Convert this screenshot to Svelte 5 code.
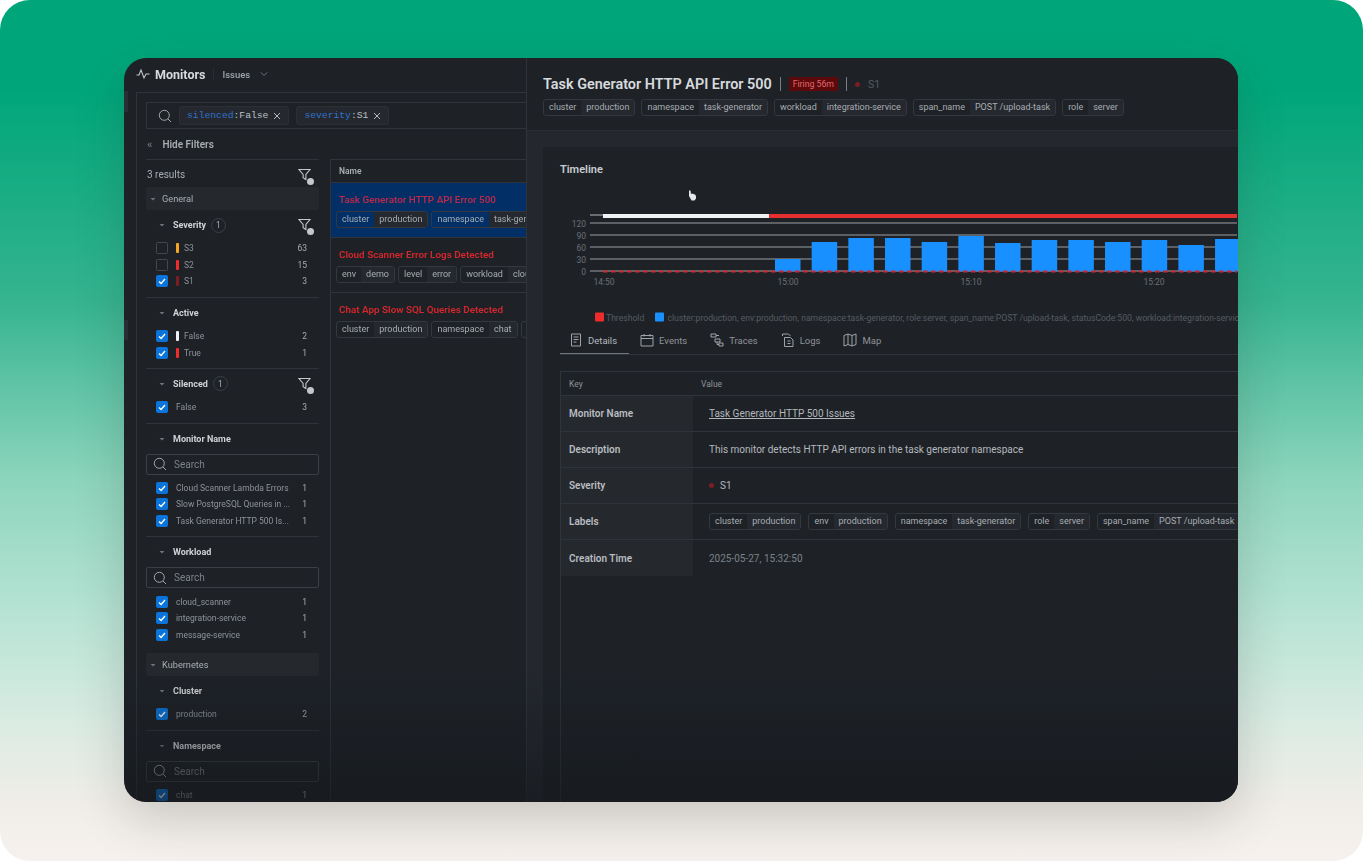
<script>
  const sevRows = [
    { label: "S3", color: "#f5a623", count: 63, on: false },
    { label: "S2", color: "#ef2b2b", count: 15, on: false },
    { label: "S1", color: "#7c1d24", count: 3, on: true }
  ];
  const monitors = ["Cloud Scanner Lambda Errors", "Slow PostgreSQL Queries in ...", "Task Generator HTTP 500 Is..."];
  const workloads = ["cloud_scanner", "integration-service", "message-service"];

  const issues = [
    { title: "Task Generator HTTP API Error 500", selected: true, chips: [["cluster", "production"], ["namespace", "task-generator"]] },
    { title: "Cloud Scanner Error Logs Detected", chips: [["env", "demo"], ["level", "error"], ["workload", "cloud_scanner"]] },
    { title: "Chat App Slow SQL Queries Detected", chips: [["cluster", "production"], ["namespace", "chat"], ["workload", "chat"]] }
  ];

  const headChips = [["cluster", "production"], ["namespace", "task-generator"], ["workload", "integration-service"], ["span_name", "POST /upload-task"], ["role", "server"]];
  const labelChips = [["cluster", "production"], ["env", "production"], ["namespace", "task-generator"], ["role", "server"], ["span_name", "POST /upload-task"]];

  const tabs = ["Details", "Events", "Traces", "Logs", "Map"];

  const grid = [[120, 223], [90, 235], [60, 247], [30, 259], [0, 271]];
  const barTops = [259, 242, 238, 238, 242, 236, 243, 240, 240, 242, 240, 245, 239];
  const ticks = [["14:50", 604], ["15:00", 788], ["15:10", 971], ["15:20", 1154]];
</script>

{#snippet chip(pair)}
  <span class="chip"><span class="k">{pair[0]}</span><span class="v">{pair[1]}</span></span>
{/snippet}

{#snippet check(on)}
  <span class="box" class:on>
    {#if on}
      <svg viewBox="0 0 12 12" width="12" height="12"><path d="M3 6.400 5.100 8.400 9 4" fill="none" stroke="#fff" stroke-width="1.400"/></svg>
    {/if}
  </span>
{/snippet}

{#snippet caret()}
  <svg class="caret" viewBox="0 0 8 8" width="8" height="8"><path d="M1.500 3h5L4 5.600z" fill="#6d737b"/></svg>
{/snippet}

{#snippet filterIcon()}
  <span class="fi">
    <svg viewBox="0 0 14 14" width="14" height="14"><path d="M1 1.500h11L7.900 6.500v5L5.100 9.800V6.500z" fill="none" stroke="#c4c8cc" stroke-width="1.100"/></svg>
    <i></i>
  </span>
{/snippet}

{#snippet search()}
  <svg viewBox="0 0 14 14" width="14" height="14"><circle cx="6.300" cy="6.300" r="5" fill="none" stroke="#a2a7ad" stroke-width="1"/><path d="M10 10l3 3" stroke="#a2a7ad" stroke-width="1"/></svg>
{/snippet}

{#snippet cross()}
  <svg viewBox="0 0 8 8" width="8" height="8"><path d="M1 1l6 6M7 1L1 7" stroke="#b4b8bd" stroke-width="1"/></svg>
{/snippet}

{#snippet tabIcon(name)}
  <svg viewBox="0 0 14 14" width="14" height="14" fill="none" stroke="#9ea3a9" stroke-width="1">
    {#if name === "Details"}
      <path d="M2.500 1h9v12h-9z M4.500 4h5 M4.500 6.500h5 M4.500 9h3"/>
    {:else if name === "Events"}
      <path d="M1 2.500h12v10.500H1z M1 5.500h12 M4 1v2.500 M10 1v2.500"/>
    {:else if name === "Traces"}
      <path d="M1 1h5v3H1z M5 6h5v3H5z M9 10h4v3H9z M6 2.500h3 M7 9v2.500h2"/>
    {:else if name === "Logs"}
      <path d="M1.500 3V1h6l2 2M3.500 4.500h6l2.500 2.500v6.500H3.500z M6.500 8h3 M6.500 10.500h3"/>
    {:else}
      <path d="M1 2.500l4-1.500 4 1.500 4-1.500v10.500l-4 1.500-4-1.500-4 1.500z M5 1v10.500 M9 2.500V13"/>
    {/if}
  </svg>
{/snippet}

<div class="page">
  <div class="window">
    <span class="grip one"></span>
    <span class="grip two"></span>

    <section class="left">
      <header class="topbar">
        <svg viewBox="0 0 14 12" width="14" height="12"><path d="M.5 7h2.500l2-5 3 8 2-4h3.500" fill="none" stroke="#c4c8cc" stroke-width="1.100"/></svg>
        <strong>Monitors</strong>
        <span class="sep"></span>
        <span class="issues">Issues</span>
        <svg viewBox="0 0 8 8" width="8" height="8"><path d="M1 2.500l3 3 3-3" fill="none" stroke="#6d737b" stroke-width="1"/></svg>
      </header>

      <div class="body">
        <div class="searchbar">
          {@render search()}
          <span class="tag"><span><b>silenced</b>:False</span>{@render cross()}</span>
          <span class="tag"><span><b>severity</b>:S1</span>{@render cross()}</span>
        </div>
        <div class="hide"><span class="chev">«</span>Hide Filters</div>

        <div class="split">
          <aside class="filters">
            <div class="results"><span>3 results</span>{@render filterIcon()}</div>

            <div class="group">{@render caret()}General</div>

            <div class="sec">
              <div class="sec-head">{@render caret()}<strong>Severity</strong><span class="num">1</span>{@render filterIcon()}</div>
              {#each sevRows as r}
                <div class="row">{@render check(r.on)}<i class="mark" style="background: {r.color}"></i><span class="name">{r.label}</span><span class="n">{r.count}</span></div>
              {/each}
            </div>

            <div class="sec">
              <div class="sec-head">{@render caret()}<strong>Active</strong></div>
              <div class="row">{@render check(true)}<i class="mark" style="background: #eef0f2"></i><span class="name">False</span><span class="n">2</span></div>
              <div class="row">{@render check(true)}<i class="mark" style="background: #ef2b2b"></i><span class="name">True</span><span class="n">1</span></div>
            </div>

            <div class="sec">
              <div class="sec-head">{@render caret()}<strong>Silenced</strong><span class="num">1</span>{@render filterIcon()}</div>
              <div class="row">{@render check(true)}<span class="name">False</span><span class="n">3</span></div>
            </div>

            <div class="sec">
              <div class="sec-head">{@render caret()}<strong>Monitor Name</strong></div>
              <div class="find">{@render search()}Search</div>
              {#each monitors as m}
                <div class="row">{@render check(true)}<span class="name">{m}</span><span class="n">1</span></div>
              {/each}
            </div>

            <div class="sec last">
              <div class="sec-head">{@render caret()}<strong>Workload</strong></div>
              <div class="find">{@render search()}Search</div>
              {#each workloads as m}
                <div class="row">{@render check(true)}<span class="name">{m}</span><span class="n">1</span></div>
              {/each}
            </div>

            <div class="group">{@render caret()}Kubernetes</div>

            <div class="sec">
              <div class="sec-head">{@render caret()}<strong>Cluster</strong></div>
              <div class="row">{@render check(true)}<span class="name">production</span><span class="n">2</span></div>
            </div>

            <div class="sec last">
              <div class="sec-head">{@render caret()}<strong>Namespace</strong></div>
              <div class="find">{@render search()}Search</div>
              <div class="row">{@render check(true)}<span class="name">chat</span><span class="n">1</span></div>
            </div>
          </aside>

          <div class="list">
            <div class="list-head">Name</div>
            {#each issues as it}
              <div class="issue" class:selected={it.selected}>
                <div class="issue-title">{it.title}</div>
                <div class="chips">
                  {#each it.chips as c}{@render chip(c)}{/each}
                </div>
              </div>
            {/each}
          </div>
        </div>
      </div>
    </section>

    <section class="right">
      <header class="detail-head">
        <div class="title-row">
          <h1>Task Generator HTTP API Error 500</h1>
          <span class="bar"></span>
          <span class="firing">Firing 56m</span>
          <span class="bar"></span>
          <i class="dot"></i><span class="sev">S1</span>
        </div>
        <div class="chips">
          {#each headChips as c}{@render chip(c)}{/each}
        </div>
      </header>

      <div class="card">
        <h2>Timeline</h2>

        <svg class="chart" viewBox="560 180 678 145" width="678" height="145">
          <!-- cursor -->
          <path d="M689 190.500l1.500 0 .5 3.500 1-.5 3 1 1 1.500v2.500l-1.500 2h-3l-2.500-4.500z" fill="#e6e8ea"/>
          <line x1="590" x2="603" y1="215" y2="215" stroke="#9b9ea2" stroke-width="1.200"/>
          {#each grid as [v, y]}
            <line x1="590" x2="1237" y1={y} y2={y} stroke="#9b9ea2" stroke-width="1.200"/>
            <text x="586" y={y + 3.500} text-anchor="end" class="axis">{v}</text>
          {/each}
          <rect x="603" y="214" width="166" height="4" fill="#f1f2f3"/>
          <rect x="769" y="214" width="468" height="4" fill="#e5302f"/>
          {#each barTops as top, i}
            <rect x={775 + i * 36.67} y={top} width="25.500" height={271.500 - top} fill="#1890ff"/>
          {/each}
          <line x1="603" x2="1237" y1="271.500" y2="271.500" stroke="#cf2630" stroke-width="1.800" stroke-dasharray="4.500 3.500"/>
          {#each ticks as [t, x]}
            <text x={x} y="284.500" text-anchor="middle" class="axis">{t}</text>
          {/each}
          <rect x="595" y="312.500" width="9" height="9" rx="1" fill="#ef2b2b"/>
          <text x="606" y="320.500" class="legend">Threshold</text>
          <rect x="655" y="312.500" width="9" height="9" rx="1" fill="#1890ff"/>
          <text x="667.500" y="320.500" class="legend">cluster:production, env:production, namespace:task-generator, role:server, span_name:POST /upload-task, statusCode:500, workload:integration-service</text>
        </svg>

        <nav class="tabs">
          {#each tabs as t, i}
            <span class="tab" class:active={i === 0}>{@render tabIcon(t)}{t}</span>
          {/each}
        </nav>

        <div class="kv">
          <div class="kv-row head"><div class="key">Key</div><div class="val">Value</div></div>
          <div class="kv-row"><div class="key">Monitor Name</div><div class="val"><u>Task Generator HTTP 500 Issues</u></div></div>
          <div class="kv-row"><div class="key">Description</div><div class="val">This monitor detects HTTP API errors in the task generator namespace</div></div>
          <div class="kv-row"><div class="key">Severity</div><div class="val"><i class="dot"></i>S1</div></div>
          <div class="kv-row"><div class="key">Labels</div><div class="val chips">{#each labelChips as c}{@render chip(c)}{/each}</div></div>
          <div class="kv-row end"><div class="key">Creation Time</div><div class="val muted">2025-05-27, 15:32:50</div></div>
        </div>
      </div>
    </section>

    <div class="fade"></div>
  </div>
</div>

<style>
  :global(body) {
    margin: 0;
    background: #fff;
  }

  .page {
    width: 1363px;
    height: 861px;
    box-sizing: border-box;
    padding: 58px 125px 59px 124px;
    border-radius: 30px;
    overflow: hidden;
    background: linear-gradient(180deg, #00a67a 0, #00a67a 90px, #35b48f 300px, #8dd5bd 480px, #b9e4d5 620px, #d9ebe2 720px, #f0ede8 800px, #f6f1ee 861px);
    font-family: Roboto, sans-serif;
  }

  .window {
    position: relative;
    display: flex;
    height: 744px;
    border-radius: 22px;
    overflow: hidden;
    background: #1e2227;
    color: #c8ccd0;
    box-shadow: 0 16px 50px rgba(40, 40, 40, 0.2);
    filter: blur(0.55px);
  }

  .grip {
    position: absolute;
    left: 0;
    width: 4px;
    background: #2a2e34;
  }

  .grip.one {
    top: 33px;
    height: 21px;
  }

  .grip.two {
    top: 262px;
    height: 20px;
  }

  .fade {
    position: absolute;
    left: 0;
    right: 0;
    bottom: 0;
    height: 130px;
    background: linear-gradient(180deg, rgba(20, 23, 27, 0), rgba(20, 23, 27, 0.6));
    pointer-events: none;
  }

  .left {
    width: 402px;
    flex: none;
    display: flex;
    flex-direction: column;
    border-right: 1px solid #2f343a;
  }

  .topbar {
    height: 34px;
    flex: none;
    display: flex;
    align-items: center;
    gap: 5px;
    padding: 0 0 2px 12px;
    box-sizing: border-box;
    font-size: 11px;
  }

  .topbar strong {
    font-size: 12.500px;
    color: #d8dbde;
  }

  .sep {
    width: 1px;
    height: 12px;
    margin: 0 3px;
    background: #2a2e34;
  }

  .issues {
    font-size: 9.500px;
    font-weight: 500;
    color: #9ea3a9;
    margin-right: 5px;
  }

  .body {
    flex: 1;
    min-height: 0;
    margin-left: 12px;
    padding-left: 9px;
    border-left: 1px solid #2f343a;
    border-top: 1px solid #2f343a;
  }

  .searchbar {
    height: 27px;
    margin-top: 9px;
    display: flex;
    align-items: center;
    gap: 7px;
    padding-left: 11px;
    border: 1px solid #2f343a;
    border-right: 0;
    box-sizing: border-box;
  }

  .tag {
    height: 17px;
    padding: 0 7px 0 7px;
    display: flex;
    align-items: center;
    gap: 5px;
    white-space: pre;
    font: 9.700px "Liberation Mono", monospace;
    color: #bcc0c5;
    background: #25292f;
    border: 1px solid #2c3036;
    border-radius: 3px;
  }

  .tag b {
    font-weight: 400;
    color: #2f72cc;
  }

  .hide {
    height: 30px;
    display: flex;
    align-items: center;
    gap: 10px;
    font-size: 10px;
    font-weight: 600;
    color: #a8adb2;
  }

  .chev {
    color: #6d737b;
    font-size: 11px;
    padding-left: 1px;
  }

  .split {
    display: flex;
    gap: 11px;
    align-items: stretch;
  }

  .filters {
    width: 173px;
    flex: none;
    border-top: 1px solid #2f343a;
    font-size: 9px;
    height: 700px;
  }

  .results {
    height: 27px;
    display: flex;
    align-items: center;
    justify-content: space-between;
    box-sizing: border-box;
    padding: 2px 0 0 1px;
    font-size: 10px;
    color: #a8adb2;
  }

  .group {
    height: 23px;
    display: flex;
    align-items: center;
    gap: 5px;
    padding-left: 3px;
    font-size: 9.200px;
    color: #a8adb2;
    background: #25292e;
    border-radius: 2px;
  }

  .sec {
    padding-bottom: 7px;
    border-bottom: 1px solid #2f343a;
  }

  .sec.last {
    border-bottom: 0;
    padding-bottom: 10px;
  }

  .sec-head {
    height: 30px;
    display: flex;
    align-items: center;
    gap: 7px;
    padding-left: 12px;
    color: #cfd2d6;
  }

  .sec-head strong {
    font-weight: 700;
  }

  .num {
    width: 15px;
    height: 15px;
    margin-left: -2px;
    display: grid;
    place-items: center;
    border: 1px solid #3a3f45;
    border-radius: 50%;
    box-sizing: border-box;
    font-size: 8.500px;
    color: #a8adb2;
  }

  .fi {
    position: relative;
    margin-left: auto;
    width: 14px;
    height: 14px;
    margin-right: 7px;
  }

  .fi svg {
    display: block;
  }

  .fi i {
    position: absolute;
    right: -2px;
    bottom: -3px;
    width: 7px;
    height: 7px;
    border-radius: 50%;
    background: #c4c8cc;
  }

  .row {
    height: 16.600px;
    display: flex;
    align-items: center;
    padding-left: 10px;
    padding-right: 12px;
    color: #8e9399;
    font-size: 8.500px;
  }

  .box {
    width: 12px;
    height: 12px;
    flex: none;
    margin-right: 8px;
    border: 1px solid #43484e;
    border-radius: 1.500px;
    box-sizing: border-box;
    display: grid;
    place-items: center;
  }

  .box svg {
    margin: -1px;
  }

  .box.on {
    background: #0a74da;
    border-color: #0a74da;
  }

  .mark {
    width: 3px;
    height: 10px;
    flex: none;
    margin-right: 5px;
    border-radius: 1px;
  }

  .name {
    flex: 1;
    white-space: nowrap;
  }

  .n {
    color: #a8adb2;
  }

  .find {
    height: 21px;
    display: flex;
    align-items: center;
    gap: 7px;
    padding-left: 6px;
    margin-bottom: 5px;
    box-sizing: border-box;
    border: 1px solid #3a3f45;
    border-radius: 2px;
    color: #7c8187;
    font-size: 10px;
  }

  .list {
    flex: 1;
    min-width: 0;
    overflow: hidden;
    border-left: 1px solid #2f343a;
    border-top: 1px solid #2f343a;
    height: 700px;
  }

  .list-head {
    height: 23px;
    display: flex;
    align-items: center;
    padding-left: 8px;
    font-size: 8.500px;
    font-weight: 600;
    color: #a8adb2;
    border-bottom: 1px solid #2f343a;
    box-sizing: border-box;
  }

  .issue {
    height: 55px;
    padding: 11px 0 0 5px;
    box-sizing: border-box;
    overflow: hidden;
    border-bottom: 1px solid #2f343a;
  }

  .issue:last-child {
    border-bottom: 0;
  }

  .issue .chips {
    gap: 3px;
  }

  .issue.selected {
    background: #012f66;
  }

  .issue.selected .issue-title {
    color: #b8294c;
  }

  .issue-title {
    padding-left: 3px;
    margin-bottom: 6px;
    font-size: 9.900px;
    font-weight: 600;
    color: #d4272c;
    white-space: nowrap;
  }

  .chips {
    display: flex;
    gap: 4px;
    white-space: nowrap;
  }

  .chip {
    flex: none;
    display: inline-flex;
    height: 17px;
    align-items: stretch;
    font-size: 9px;
    line-height: 15px;
    color: #a8adb2;
    border: 1px solid #33383e;
    border-radius: 3px;
    box-sizing: border-box;
    overflow: hidden;
  }

  .k {
    padding: 0 5px;
  }

  .v {
    padding: 0 5px;
    background: #25292f;
  }

  .right {
    flex: 1;
    min-width: 0;
    display: flex;
    flex-direction: column;
    background: #24282e;
  }

  .detail-head {
    height: 73px;
    flex: none;
    box-sizing: border-box;
    padding: 15px 0 0 16px;
    background: #1e2227;
    border-bottom: 1px solid #2a2e34;
  }

  .title-row {
    height: 22px;
    margin-bottom: 4px;
    display: flex;
    align-items: center;
    gap: 8px;
  }

  .detail-head .chips {
    gap: 6px;
  }

  h1 {
    margin: 0;
    font-size: 14.400px;
    font-weight: 600;
    color: #d8dbde;
    white-space: nowrap;
  }

  .bar {
    width: 1px;
    height: 14px;
    background: #7a7f85;
  }

  .firing {
    padding: 2px 4px;
    font-size: 8.700px;
    color: #e0686c;
    background: #5c0a0c;
    border-radius: 1px;
  }

  .dot {
    width: 5px;
    height: 5px;
    flex: none;
    display: inline-block;
    border-radius: 50%;
    background: #7c1d24;
  }

  .sev {
    font-size: 10.500px;
    color: #555a60;
  }

  .card {
    flex: 1;
    min-height: 0;
    margin: 16px 0 0 16px;
    padding: 16px 0 0 17px;
    background: #1e2227;
    overflow: hidden;
  }

  h2 {
    margin: 0;
    height: 17px;
    font-size: 11px;
    font-weight: 600;
    color: #c8ccd0;
  }

  .chart {
    display: block;
  }

  .axis {
    font: 8.500px Roboto, sans-serif;
    fill: #6a6f75;
  }

  .legend {
    font: 8.600px Roboto, sans-serif;
    fill: #565b61;
  }

  .tabs {
    display: flex;
    height: 30px;
    box-sizing: border-box;
    align-items: stretch;
    border-bottom: 1px solid #2f343a;
    font-size: 9.500px;
    color: #8e9399;
  }

  .tab {
    display: flex;
    align-items: center;
    gap: 5px;
    padding: 1px 12px 0 9px;
    margin-right: 2px;
  }

  .tab.active {
    color: #b4b8bd;
    box-shadow: inset 0 -1px 0 #70757b;
  }

  .kv {
    margin-top: 16px;
    border-top: 1px solid #2f343a;
    border-left: 1px solid #2f343a;
    height: 440px;
  }

  .kv-row {
    display: flex;
    height: 36px;
    border-bottom: 1px solid #2f343a;
    box-sizing: border-box;
    font-size: 10px;
  }

  .kv-row.end {
    border-bottom: 0;
  }

  .kv-row.head {
    height: 24px;
    font-size: 8.500px;
    color: #8e9399;
  }

  .key {
    width: 132px;
    flex: none;
    box-sizing: border-box;
    padding-left: 8px;
    display: flex;
    align-items: center;
    font-weight: 600;
    background: #25292e;
    color: #b8bcc1;
  }

  .head .key {
    background: none;
    font-weight: 400;
    color: #8e9399;
  }

  .val {
    flex: 1;
    min-width: 0;
    display: flex;
    align-items: center;
    gap: 6px;
    padding-left: 16px;
    overflow: hidden;
    white-space: nowrap;
    color: #b4b8bd;
  }

  .val.chips {
    gap: 7px;
  }

  .head .val {
    padding-left: 8px;
    color: #8e9399;
  }

  .muted {
    color: #7c8187;
  }
</style>
